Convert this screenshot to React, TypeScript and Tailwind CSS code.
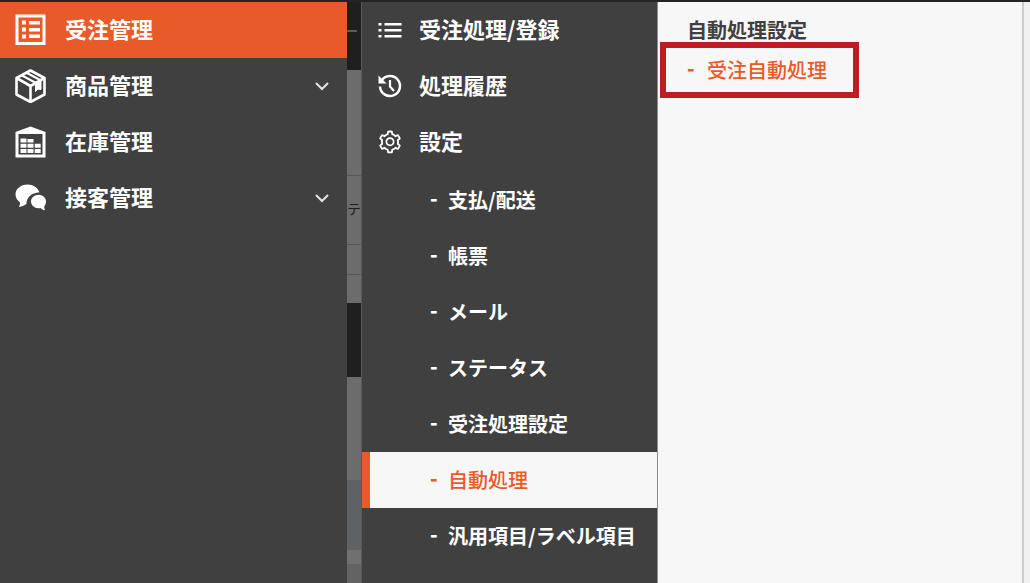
import type { ReactNode } from 'react';
import { AiOutlineSetting } from 'react-icons/ai';

const ICON_CLASS = 'h-8 w-8 shrink-0';
const SUB_ICON_CLASS = 'h-[26px] w-[26px] shrink-0';

function OrderIcon() {
  return (
    <svg viewBox="0 0 32 32" className={ICON_CLASS} fill="currentColor" aria-hidden="true">
      <path fillRule="evenodd" d="M.5.500h30v30.500H.500zM3.500 3.500v24.500h24V3.500z" />
      <path d="M7 6.500h4v4H7zM14 7h11v3.500H14zM7 13.500h4v4H7zM14 14h11v3.500H14zM7 20.500h4v4H7zM14 20.500h11v3.500H14z" />
    </svg>
  );
}

function ProductIcon() {
  return (
    <svg viewBox="0 0 32 34" className="h-[34px] w-8 shrink-0" fill="none" stroke="currentColor" strokeWidth="2.600" strokeLinejoin="round" aria-hidden="true">
      <path d="M15.500 1.500 29.500 9v16.500l-14 7.500-14-7.500V9z" />
      <path d="M1.500 9l14 8 14-8M15.500 17v16" />
      <path d="M7 6.500l14 7.500M12 4l14 7.500" strokeWidth="2" />
      <path d="M20.500 13.500v9l2.500-2.500 3 .5v-10z" fill="currentColor" strokeWidth="1" />
    </svg>
  );
}

function StockIcon() {
  return (
    <svg viewBox="0 0 32 32" className={ICON_CLASS} fill="currentColor" aria-hidden="true">
      <path fillRule="evenodd" d="M15.500.500l15 5.500v25.500H.500V6zM3.500 8v20.500h24V8z" />
      <path d="M5.500 12.500h6v4h-6zM12.500 13h6v3.500h-6zM5.500 17.700h6v4h-6zM12.500 17.700h6v4h-6zM19.700 17.700h6v4h-6zM5.500 23h6v4h-6zM12.500 23h6v4h-6zM19.700 23h6v4h-6z" />
    </svg>
  );
}

function ServiceIcon() {
  return (
    <svg viewBox="0 0 32 32" className={ICON_CLASS} fill="currentColor" aria-hidden="true">
      <path d="M12.500 2.500C5.800 2.500.500 6.900.500 12.500c0 3.300 1.800 6 4.600 7.900-.1 1.600-.5 3.200-1.100 4.600 3-.3 5.200-1.400 6.600-2.700l.8-.1C11.300 16 16.200 10.800 24.500 10.300 22.800 5.700 18.200 2.500 12.500 2.500z" />
      <path d="M23.500 12.800c-4.200 0-7.500 3-7.500 6.700s3.300 6.700 7.500 6.700c.7 0 1.400-.1 2-.2 1.200 1.300 2.700 2 4.500 2.300-.5-1.100-.8-2.300-.8-3.800 1.100-1.200 1.800-3 1.800-5 0-3.700-3.300-6.700-7.500-6.700z" />
    </svg>
  );
}

function ListIcon() {
  return (
    <svg viewBox="0 0 26 26" className={SUB_ICON_CLASS} fill="currentColor" aria-hidden="true">
      <path d="M1.500 6h3v2.500h-3zM7.500 6h17v2.500h-17zM1.500 12h3v2.500h-3zM7.500 12h17v2.500h-17zM1.500 18h3v2.500h-3zM7.500 18h17v2.500h-17z" />
    </svg>
  );
}

function HistoryIcon() {
  return (
    <svg viewBox="0 0 26 26" className={SUB_ICON_CLASS} fill="none" stroke="currentColor" strokeWidth="2.500" aria-hidden="true">
      <path d="M4.600 7.600A10 10 0 1 1 3 13.500" />
      <path d="M1.500 2.500v8h8z" fill="currentColor" stroke="none" />
      <path d="M13 7v6.500l4 4.500" strokeWidth="2.200" />
    </svg>
  );
}

function ChevronDown() {
  return (
    <svg viewBox="0 0 14 9" className="h-[9px] w-[14px]" fill="none" stroke="#e4e4e4" strokeWidth="2" aria-hidden="true">
      <path d="M1 1l6 6 6-6" />
    </svg>
  );
}

interface MainItem {
  label: string;
  icon: ReactNode;
  active?: boolean;
  expandable?: boolean;
}

const MAIN_ITEMS: MainItem[] = [
  { label: '受注管理', icon: <OrderIcon />, active: true },
  { label: '商品管理', icon: <ProductIcon />, expandable: true },
  { label: '在庫管理', icon: <StockIcon /> },
  { label: '接客管理', icon: <ServiceIcon />, expandable: true },
];

const ORDER_ITEMS = [
  { label: '受注処理/登録', icon: <ListIcon /> },
  { label: '処理履歴', icon: <HistoryIcon /> },
  { label: '設定', icon: <AiOutlineSetting className={SUB_ICON_CLASS} /> },
];

const SETTING_ITEMS = ['支払/配送', '帳票', 'メール', 'ステータス', '受注処理設定', '自動処理', '汎用項目/ラベル項目'];

const ACTIVE_SETTING = '自動処理';

export default function App() {
  return (
    <div className="flex min-h-screen flex-col bg-[#6a6a6a] font-['Noto_Sans_CJK_JP',sans-serif]">
      <div className="h-0.5 bg-[#232323]" />
      <div className="flex flex-1">
        {/* Main menu */}
        <nav className="w-[347px] shrink-0 bg-[#404040] text-white">
          {MAIN_ITEMS.map((item) => (
            <button
              key={item.label}
              className={`flex h-14 w-full items-center gap-[18px] pr-[18px] pl-[15px] text-left text-[22px] font-bold ${
                item.active ? 'bg-[#e85a29]' : ''
              }`}
            >
              {item.icon}
              <span className="flex-1 pb-1">{item.label}</span>
              {item.expandable && <ChevronDown />}
            </button>
          ))}
        </nav>

        {/* Page behind the menus */}
        <div className="flex w-[15px] shrink-0 flex-col border-r border-[#5a5a5a] bg-[#6c6c6c]" aria-hidden="true">
          <div className="h-[68px] bg-[#1f1f1f] pt-7">
            <div className="h-0.5 w-2.5 bg-[#5c5c5c]" />
          </div>
          <div className="h-[106px] border-b border-[#555555]" />
          <div className="h-[69px] border-b border-[#555555] pt-[22px] text-sm text-[#202020]">テ</div>
          <div className="h-[30px] border-b border-[#555555]" />
          <div className="h-7" />
          <div className="h-[74px] bg-[#1f1f1f]" />
          <div className="h-[103px]" />
          <div className="h-[70px] bg-[#5f6265]" />
          <div className="h-3.5 bg-[#707070]" />
          <div className="flex-1 bg-[#636363]" />
        </div>

        {/* Order menu */}
        <nav className="w-[295px] shrink-0 bg-[#404040] text-white">
          {ORDER_ITEMS.map(({ label, icon }) => (
            <button key={label} className="flex h-14 w-full items-center gap-4 pl-[15px] text-left text-[22px] font-bold">
              {icon}
              <span className="pb-1">{label}</span>
            </button>
          ))}
          <ul className="mt-0.5">
            {SETTING_ITEMS.map((label) => (
              <li key={label}>
                <a
                  href="#"
                  className={`flex h-14 items-center border-l-8 pl-[60px] text-xl ${
                    label === ACTIVE_SETTING
                      ? 'border-[#e85a29] bg-[#f7f7f7] font-medium text-[#e85a29]'
                      : 'border-transparent font-bold'
                  }`}
                >
                  <span className="w-[18px] pb-1 font-black">-</span>
                  {label}
                </a>
              </li>
            ))}
          </ul>
        </nav>

        {/* Automatic processing */}
        <section className="flex-1 border-l border-[#8c8c8c] bg-[#f7f7f7] pt-3 pl-0.5">
          <h2 className="h-7 pl-[27px] text-xl leading-8 font-bold text-[#404040]">自動処理設定</h2>
          <a
            href="#"
            className="flex h-14 w-[199px] items-center border-6 border-[#bb1e23] pl-[21px] text-xl font-medium text-[#e85a29]"
          >
            <span className="w-5 pb-1 font-black">-</span>
            受注自動処理
          </a>
        </section>
        <div className="w-2 shrink-0 border-l-2 border-[#cccccc] bg-[#f0f0f0]" />
      </div>
    </div>
  );
}
